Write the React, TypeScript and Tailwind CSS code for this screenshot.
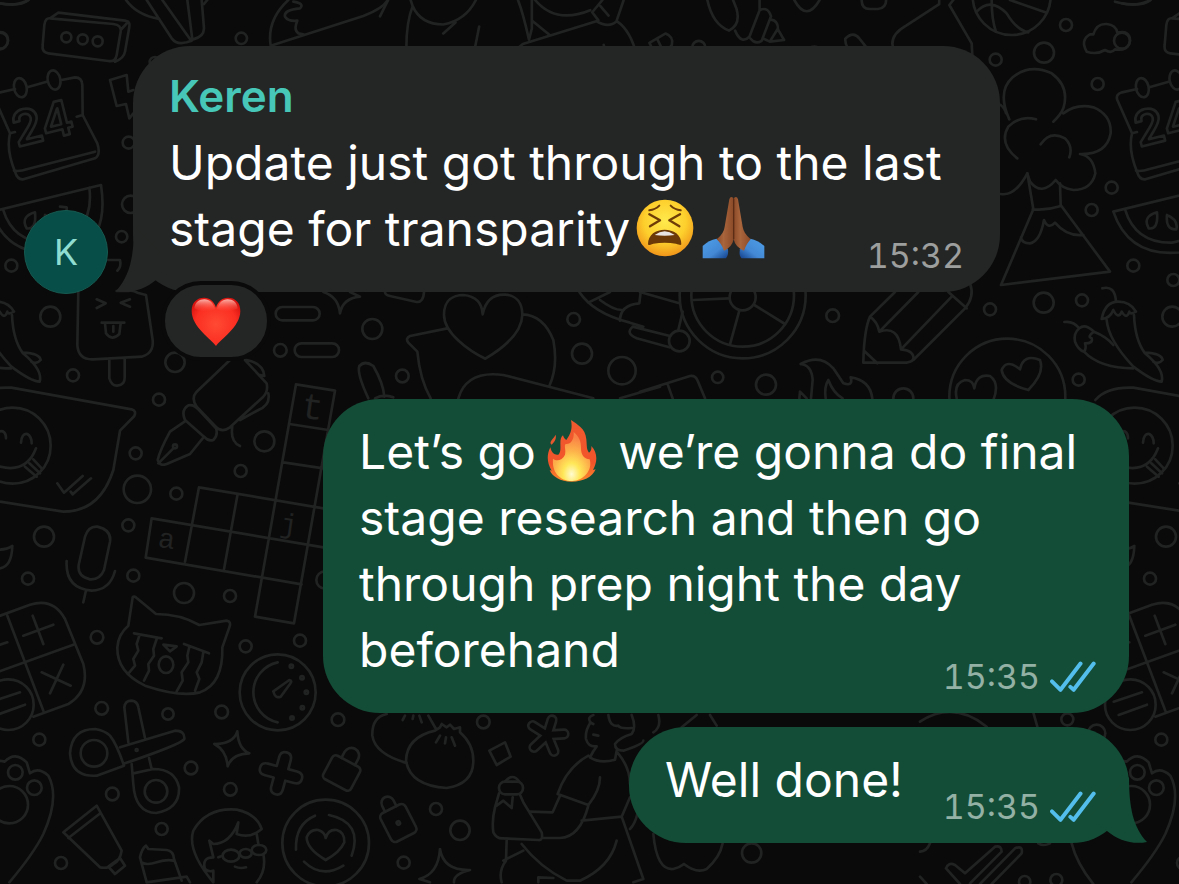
import type { ReactNode } from 'react'
import clsx from 'clsx'

const TILE_WIDTH = 3366

type Dot = [number, number, number]

function Dots({ items }: { items: Dot[] }) {
  return (
    <>
      {items.map(([x, y, r]) => (
        <circle key={`${x}-${y}`} cx={x} cy={y} r={r} />
      ))}
    </>
  )
}

// One tile of the doodle wallpaper, drawn at three units per pixel
function DoodleTile() {
  return (
    <>
      <g>
        <path d="M0 10 Q50 20 85 0" />
        <path d="M150 55 L340 72 Q365 75 362 95 L350 165 Q347 187 325 183 L145 160 Q125 157 128 135 L133 75 Q136 53 150 55 M150 55 L175 38 L375 62 Q392 65 388 80 L375 155 Q372 175 345 185 M362 90 L385 65" />
        <Dots items={[[199, 112, 15], [248, 118, 15], [293, 124, 15], [0, 122, 24], [724, 115, 17], [386, 428, 18], [392, 613, 26], [365, 710, 17], [465, 187, 16]]} />
        <path d="M378 0 Q410 45 478 57 M440 0 L515 115 Q530 135 560 127 L575 122 M487 0 L572 120 M562 0 L577 118 M605 0 L612 85 Q612 110 580 118 M612 12 L622 0" />
        <path d="M865 0 Q800 60 812 137 L1090 48 Q1150 25 1163 0 M880 5 Q915 10 900 25 Q850 30 855 50 Q865 65 892 62 Q880 90 895 100 L910 103" />
        <path d="M45 267 L0 277 Q-20 283 -14 300 L30 400 Q18 450 45 515 Q52 540 70 538 L285 475 Q303 465 292 430 L248 345 L247 255 Q246 232 225 232 L185 240 M82 262 L140 245 M42 512 Q60 515 80 508 L285 455 M30 400 L45 396 M230 350 L248 345" />
        <ellipse cx="61" cy="263" rx="19" ry="29" transform="rotate(-12 61 263)" />
        <ellipse cx="162" cy="240" rx="19" ry="29" transform="rotate(-12 162 240)" />
        <path d="M330 240 L380 225 L385 275 L400 270 M330 240 L350 318 L378 312 L388 355 L400 340" />
        <path d="M-26 635 L303 555 Q325 700 240 745 Q30 800 -26 635 M9 628 Q40 730 150 728 Q285 700 268 563" />
        <path d="M105 637 Q60 650 80 685 Q110 690 105 637 M135 645 Q170 660 163 688 Q130 690 135 645 M180 620 L200 622 L200 650" />
      </g>

      {/* top edge */}
      <g transform="translate(1140 0) scale(1.2245)" strokeWidth="6.5">
        <path d="M0 40 L20 0 M65 140 Q62 60 80 15 Q100 60 155 60 Q210 50 235 0 M80 15 L75 0 M155 82 L185 55 M228 140 L243 65" />
        <path d="M338 0 Q350 30 365 97 M372 50 L415 85 M372 0 Q372 30 372 70 L365 97 M380 0 Q430 60 515 25 M350 135 L335 120 L350 108 L530 52 Q560 70 580 52 Q615 75 630 140 M520 30 L545 0 M580 50 L597 0 M520 30 L535 50 M540 15 L560 38 M548 110 L558 138 M570 120 L578 138" />
        <path d="M660 105 L700 82 Q720 90 715 110 Q705 125 685 120 L695 140 M660 105 L678 140 M680 97 L690 118" />
        <Dots items={[[781, 116, 16], [1064, 130, 16]]} />
        <path d="M802 0 Q815 60 855 75 Q885 60 873 20 L865 0 M870 75 Q885 110 905 90 L930 25 L930 0 M930 25 Q950 15 958 40 L935 100 Q920 110 908 95 M958 48 Q975 50 975 70 L955 102 L940 95 M975 72 L990 98 L955 102" />
        <path d="M1015 0 Q1045 55 1077 0 M1180 0 Q1180 22 1200 22 L1220 22 Q1240 20 1240 0 M1140 95 Q1160 75 1175 95 L1203 130 M1140 95 Q1138 115 1165 140 M1165 138 L1185 115" />
        <path d="M1370 0 L1370 10 L1290 62 Q1240 90 1262 130 L1275 120 L1290 130 L1300 122 L1308 138" />
      </g>

      {/* volcano, chillies and basketball */}
      <g transform="translate(2820 0)">
        <path d="M40 0 L28 15 L95 130 L97 165 M110 35 Q150 -10 200 40 Q230 90 265 97 M155 0 Q155 60 168 95 M210 0 L320 38 M525 5 Q600 25 632 0" />
        <Dots items={[[215, -12, 117], [378, 75, 18], [312, 158, 30], [167, 179, 18], [473, 252, 18], [515, 563, 18], [455, 630, 18], [580, 797, 18], [700, 840, 18], [311, 908, 30], [426, 901, 18], [150, 928, 18], [697, 950, 30], [416, 1139, 18], [202, 1190, 174]]} />
        <path d="M440 155 Q420 120 450 103 L460 103 Q470 70 500 72 Q528 75 532 98 Q570 90 570 122 Q565 155 525 148 Q515 162 495 150 Q470 165 440 155" />
        <path d="M208 358 Q170 275 218 232 Q270 190 335 220 Q390 260 370 325 Q362 345 340 365 M370 340 Q410 310 460 322 Q515 345 512 400 Q500 465 420 462 Q460 468 466 520 Q455 570 400 570 Q365 565 347 540 Q305 590 270 545 L262 520 Q225 590 182 582 M288 358 Q240 345 205 380 Q175 430 232 475 M302 433 Q330 390 375 415 Q400 440 388 472 M182 315 Q195 325 198 340" />
        <path d="M262 520 L280 628 L183 855 L510 815 L362 615 L360 550 M278 628 Q320 632 362 618 M243 712 Q245 730 270 730 Q300 725 312 660 Q325 690 345 668 Q380 710 430 705" />
        <path d="M487 865 Q525 855 528 905 M485 957 Q495 905 535 905 Q570 905 588 935 Q570 945 568 935 Q560 960 545 935 Q535 960 520 930 Q510 955 485 957 M500 960 Q505 1020 580 1100 Q640 1145 665 1145 Q675 1110 615 1060 Q585 1020 582 945 M615 1058 Q665 1060 668 1080 Q655 1095 640 1085" />
        <path d="M373 966 Q400 962 418 985 Q400 1000 405 1025 Q415 1050 432 1055 Q440 1045 435 1030 Q460 1030 455 1015 Q440 1010 462 995 Q435 970 418 985 M462 995 Q500 1010 520 1035 M432 1055 Q480 1105 580 1105" />
        <path d="M265 1170 Q190 1150 185 1110 Q200 1075 240 1108 Q250 1060 300 1080 Q315 1120 265 1170 M50 1195 Q40 1150 75 1140 Q100 1140 103 1165 Q110 1120 150 1128 Q180 1150 160 1200" />
      </g>

      {/* lolly, pen and crossword */}
      <g transform="translate(0 870)">
        <path d="M235 0 L232 165 Q235 210 280 208 L425 200 Q462 190 458 150 L438 15 L412 8 Q400 0 385 3 L350 3 M325 -90 L360 -90 Q365 -70 352 -58 M290 28 L317 40 L290 54 M390 28 L362 38 L390 50 M305 98 L373 98 M315 100 L318 130 Q335 155 358 132 L362 100 M340 108 L340 125 M328 208 L328 265 Q335 288 352 287 Q375 285 374 262 L374 205" />
        <Dots items={[[219, 256, 18], [525, 217, 29], [477, 329, 18], [407, 490, 18], [412, 598, 41], [529, 611, 18], [793, 454, 30], [722, 543, 18], [385, 706, 18], [132, 740, 30], [84, 866, 18], [400, 857, 18], [552, 909, 30], [975, 870, 26], [38, 467, 114]]} />
        <path d="M-80 330 Q-46 290 34 293 L395 358 Q410 362 403 378 L360 422 L340 540 Q300 665 190 665 L0 635 L-80 615 M-5 425 Q18 418 18 445 M63 458 Q65 430 82 432 Q95 440 95 460 M0 530 Q80 550 108 475 M75 530 L110 560 M88 520 L120 550 M100 508 L125 535 M172 580 L192 608 L248 558 M212 605 L218 613 L273 565" />
        <path d="M690 210 L590 305 Q572 325 590 350 L645 408 Q665 430 690 412 L790 320 Q805 305 800 280 L735 210 M740 210 Q790 220 793 258 L780 255 M805 310 Q812 345 775 360 L720 390 M697 410 Q690 455 720 468 M555 390 Q542 360 565 346 Q580 342 595 358 L648 415 Q655 435 640 450 Q625 455 612 440 Z M558 392 L510 425 Q480 480 473 510 Q478 530 500 522 L570 492 L608 445 M475 520 L520 475" />
        <circle cx="525" cy="469" r="6" />
        <path d="M868 402 L985 420 M850 517 L970 535 M597 592 L970 655 M455 685 L970 772 M437 803 L905 883 M455 685 L437 803 M597 592 L555 815 M712 617 L672 838 M1005 302 L888 283 L765 980 L882 1000 L1005 302" />
        <path d="M255 740 Q265 708 292 710 Q335 720 330 755 L312 840 Q300 870 270 868 Q232 860 236 825 Z M200 813 Q195 895 275 902 Q330 900 345 843 M257 905 L250 937 M-30 775 Q10 785 37 768 Q35 830 0 835" />
      </g>

      {/* heart in a speech bubble */}
      <g transform="translate(780 840)">
        <rect x="47" y="81" width="132" height="40" rx="20" />
        <rect x="104" y="190" width="133" height="41" rx="20" />
        <Dots items={[[61, 211, 19], [337, 147, 30], [427, 288, 19], [941, 118, 19], [966, 221, 30], [1086, 272, 41]]} />
        <path d="M190 36 Q235 50 240 100 Q248 55 300 50 L270 36 M375 36 Q375 45 390 48 L470 66 Q490 68 492 36" />
        <path d="M676 236 C630 215 552 160 552 105 C552 60 580 45 610 45 Q665 50 668 103 Q680 42 735 44 C770 46 787 70 787 105 C785 165 720 210 676 236 M562 145 L450 168 Q435 175 445 188 L472 215 Q480 300 512 355 M787 103 Q850 105 880 180 Q895 260 868 318 M595 355 Q620 270 730 285 L1000 355" />
        <path d="M325 355 Q290 280 298 258 Q315 240 340 258 Q370 310 373 350 M345 355 Q370 340 400 352" />
        <path d="M958 36 Q1000 100 1110 128 L1150 140 M985 68 L1050 36 M1020 60 Q1060 90 1085 90 M1080 122 Q1080 75 1138 70 L1142 36 M1118 140 Q1095 160 1130 175 M1118 140 L1230 168 M1130 175 L1228 202 M1080 355 L1200 320" />
      </g>

      {/* wheel, pencil and flames */}
      <g transform="translate(1920 840)">
        <Dots items={[[308, 46, 189], [308, 46, 154], [308, 52, 39], [118, 183, 31], [578, 107, 19], [233, 292, 17], [378, 314, 30], [790, 355, 30]]} />
        <path d="M0 36 L118 70 M128 95 L115 150 M160 60 L268 55 M298 92 L270 193 M343 75 L435 132 M0 335 L150 288 Q165 285 172 300 L195 355 M82 310 L98 355" />
        <path d="M765 36 L690 110 Q712 125 718 155 L835 36 M718 155 Q775 135 783 208 L935 50 M783 208 Q825 212 820 240 L975 85 M925 36 L980 85 M990 10 Q1005 50 975 85 M690 110 Q672 150 670 248 L800 248 Q820 245 820 235 M672 212 L712 250" />
        <path d="M482 252 Q540 220 580 265 L610 310 Q640 320 632 292 Q690 300 697 355 M482 252 Q515 255 518 300 L513 355 M557 355 Q552 320 565 300 Q580 340 608 355 M478 355 L480 335 L500 355" />
      </g>

      {/* calculator, cat, scissors and gauge */}
      <g transform="translate(0 1752)">
        <path d="M-80 125 L90 62 Q160 40 195 105 L250 240 Q270 320 205 360 L100 398 M-80 290 L220 182 M22 95 L130 380 M70 155 L160 122 M98 95 L130 180 M125 265 L212 305 M190 242 L150 328 M0 182 L22 175" />
        <circle cx="25" cy="362" r="76" className="fill-[#0a0a0a]" />
        <path d="M-25 353 L60 325 M-10 393 L75 362" />
        <path d="M385 125 L398 40 Q402 35 410 42 L468 90 Q540 90 598 123 L680 110 Q695 112 688 130 L667 190 Q670 300 600 325 Q540 340 435 305 Q350 265 352 190 Q355 150 385 125 M402 148 L485 163 M552 180 L627 208 M418 155 L410 180 L415 200 L400 225 L405 245 L388 265 M470 165 L460 195 L462 215 L445 240 L447 260 L432 290 M568 188 L562 215 L565 235 L545 265 L548 290 L530 322 M610 205 L605 235 L590 265 L598 285 L585 320 M490 182 L530 187 L510 202 Z" />
        <ellipse cx="498" cy="242" rx="22" ry="25" />
        <Dots items={[[690, 36, 18], [291, 160, 19], [737, 187, 18], [900, 170, 18], [305, 373, 19], [504, 390, 17], [665, 384, 19], [118, 467, 18], [573, 552, 19], [337, 630, 19], [691, 616, 19], [485, 735, 18], [183, 837, 18], [1014, 407, 19], [833, 325, 114], [282, 508, 40], [468, 622, 34], [410, 498, 3], [874, 247, 5], [906, 281, 5], [919, 325, 5], [907, 371, 5], [876, 402, 5], [46, 565, 22], [103, 611, 22], [28, 662, 56], [977, 777, 130]]} />
        <path d="M833 235 A92 92 0 0 0 833 415 M820 322 L868 288 Q878 290 870 300 L842 338 Q825 345 820 322" />
        <path d="M385 475 L373 370 Q375 350 395 350 Q412 352 415 370 L435 462 M360 490 L525 440 Q555 440 553 465 Q545 480 375 538 M330 455 Q350 480 372 545 L290 575 Q215 580 210 508 Q215 435 285 435 Q315 440 330 455 M395 540 L400 600 Q405 685 468 687 Q540 675 537 610 Q525 555 460 555 L400 568 M447 522 L455 555" />
        <path d="M643 480 Q700 480 712 442 Q715 495 748 508 Q695 510 683 547 Q680 500 643 480" />
        <path transform="translate(843 568) rotate(15)" d="M-18 -45 Q-18 -65 0 -65 Q18 -65 18 -45 L18 -18 L45 -18 Q65 -18 65 0 Q65 18 45 18 L18 18 L18 45 Q18 65 0 65 Q-18 65 -18 45 L-18 18 L-45 18 Q-65 18 -65 0 Q-65 -18 -45 -18 L-18 -18Z" />
        <g transform="translate(1025 567) rotate(28)">
          <rect x="-47" y="-40" width="94" height="80" rx="12" />
          <path d="M-22 -40 V-60 A23 23 0 0 1 24 -60 V-40" />
        </g>
        <g transform="translate(1195 717) rotate(-27)">
          <rect x="-42" y="-48" width="84" height="96" rx="14" />
          <path d="M-20 -48 V-68 A19 19 0 0 1 18 -68 V-48" />
          <circle r="5" />
        </g>
        <path d="M-60 560 Q-45 520 14 533 Q45 500 80 535 L90 568 Q115 548 145 575 Q180 640 130 750 Q100 810 28 895 M-151 778 Q-136 838 -86 900" />
        <path d="M190 745 L290 665 L365 800 Q360 830 340 840 Q325 855 300 850 Z M205 762 L298 690 M325 848 L360 822 L375 845 L345 870 Z" />
        <path d="M440 895 L420 820 Q425 795 438 785 L445 795 L500 798 Q520 800 522 825 L545 890 M425 835 Q440 845 470 835 Q500 825 520 830 M440 895 L560 878 L570 895" />
        <path d="M640 895 Q560 800 580 740 Q620 670 710 677 Q770 690 785 735 Q750 765 710 750 L715 715 Q690 780 640 780 L628 770 L640 820 Q605 820 615 855 Q625 865 640 860 L640 895 M655 820 L668 815 M770 750 L775 780 M790 810 Q800 860 770 895 M705 848 Q720 855 738 850" />
        <ellipse cx="693" cy="815" rx="25" ry="18" />
        <ellipse cx="737" cy="808" rx="18" ry="13" />
        <ellipse cx="777" cy="798" rx="22" ry="15" />
        <path d="M945 695 Q885 720 888 797 M987 693 Q1090 715 1055 815 M912 833 Q965 885 1030 845 M977 828 Q920 795 920 760 Q930 735 955 738 Q975 745 977 762 Q985 735 1010 738 Q1035 745 1033 775 Q1020 805 977 828" />
        <path d="M1160 390 Q1115 400 1117 455 Q1125 510 1220 537" />
      </g>

      {/* dumplings and the runner */}
      <g transform="translate(1140 1752)">
        <path d="M165 440 Q80 460 78 530 Q90 605 200 612 Q280 600 280 530 Q280 480 240 445 M165 440 L180 430 L185 420 L200 430 L210 422 L222 435 L240 430 L240 445 M145 395 L168 435 M180 455 L168 475 M198 460 L195 478 M215 460 L225 485 M75 395 L68 408 M100 395 L98 405 M118 395 L125 415" />
        <Dots items={[[310, 414, 19], [168, 675, 18], [240, 739, 29], [71, 836, 18], [1115, 807, 29]]} />
        <path d="M328 500 L375 475 L392 518 L350 543Z" />
        <path strokeWidth="34" d="M502 453 L516 408 M502 453 L552 450 M502 453 L522 502 M502 453 L462 490 M502 453 L458 425" />
        <path strokeWidth="18" className="stroke-[#0a0a0a]" d="M502 453 L516 408 M502 453 L552 450 M502 453 L522 502 M502 453 L462 490 M502 453 L458 425" />
        <path d="M640 393 Q620 400 632 415 Q615 440 618 465 Q625 490 650 487 Q640 500 630 520 Q660 540 705 527 L710 500 M630 415 L640 420 M640 452 L655 455 M625 515 Q560 550 533 630 L625 663 Q660 620 660 580 M685 393 Q690 430 715 425 Q720 435 755 432 M755 393 Q770 430 755 450 Q720 460 705 480 Q705 500 730 500 Q790 480 790 470 M835 393 Q845 430 820 445 M712 505 Q750 550 750 600 M605 710 L725 698 L790 885 L760 895 M725 698 L750 640 M750 735 Q765 720 772 690 M540 635 L518 685 L450 683 M625 665 Q600 760 540 762 L490 762" />
        <rect x="357" y="593" width="72" height="38" rx="18" />
        <path d="M375 593 Q398 565 418 593 M357 628 L345 670 Q335 710 340 745 Q350 765 370 763 L475 768 Q490 770 485 745 L430 655 L420 632 M350 665 L370 650 L395 672 L398 640 M380 768 L378 830 Q355 860 365 895 M425 780 Q480 850 560 890 L600 890 Q690 850 710 770 M370 830 L430 800 M475 895 L475 880 L520 882" />
        <path d="M905 430 L950 393 M990 393 L1010 425 M820 750 Q830 860 880 855 Q900 850 912 840 Q950 870 980 855 Q1020 820 1028 778 M180 795 Q190 860 270 858 Q220 870 222 895 M180 795 Q175 870 118 885 L150 895" />
      </g>

      <g transform="translate(2760 1950)">
        <path d="M0 215 Q100 150 200 230 M340 188 L352 230 M78 655 Q85 635 105 645 L135 670 L225 590 Q245 585 245 605 L150 700 M78 655 L120 702 M180 702 L285 595 Q310 585 305 610 L215 702 M0 605 Q20 605 30 580 M0 680 L20 702 M355 580 Q370 590 390 580" />
        <Dots items={[[442, 208, 18], [530, 250, 26], [409, 690, 18], [314, 695, 17]]} />
      </g>
    </>
  )
}

function Wallpaper() {
  return (
    <svg
      aria-hidden="true"
      className="pointer-events-none absolute inset-0 h-full w-full fill-none stroke-[#212222] font-['Inter',sans-serif]"
      viewBox="0 0 3537 2652"
      preserveAspectRatio="xMinYMin slice"
      strokeWidth="8"
      strokeLinecap="round"
      strokeLinejoin="round"
    >
      {[-TILE_WIDTH, 0, TILE_WIDTH].map((x) => (
        <g key={x} transform={`translate(${x} 0)`}>
          <DoodleTile />
        </g>
      ))}
      {[0, TILE_WIDTH].map((x) => (
        <text key={x} fontSize="145" fontWeight="600" transform={`translate(${x + 50} 442) rotate(-14)`}>
          24
        </text>
      ))}
      {/* crossword letters */}
      <g className="fill-[#212222] stroke-none font-['Liberation_Mono',monospace]">
        <text fontSize="110" transform="translate(900 1252) rotate(8)">t</text>
        <text fontSize="84" transform="translate(838 1596) rotate(8)">j</text>
        <text fontSize="84" transform="translate(472 1640) rotate(8)">a</text>
      </g>
    </svg>
  )
}

function TiredFace() {
  return (
    <svg role="img" aria-label="tired face" className="-my-1 ml-1.5 inline-block h-[58px] w-[58px] align-[-7px]" viewBox="0 0 174 174">
      <defs>
        <radialGradient id="face" cx="50%" cy="38%" r="62%">
          <stop offset="0" stopColor="#ffea4d" />
          <stop offset=".6" stopColor="#fdcf2c" />
          <stop offset="1" stopColor="#f0951a" />
        </radialGradient>
      </defs>
      <circle cx="87" cy="87" r="85" fill="url(#face)" />
      <g fill="none" stroke="#6e3c06" strokeWidth="6" strokeLinecap="round" strokeLinejoin="round">
        <path d="M40 34 Q58 32 70 20 M104 20 Q116 32 134 34" />
        <path strokeWidth="7" d="M40 46 L72 64 L42 82 M132 46 L100 64 L130 82" />
      </g>
      <path d="M36 136 C36 106 60 92 86 92 C112 92 137 106 136 136 C134 140 128 136 120 134 Q86 128 52 134 C42 137 37 140 36 136Z" fill="#6b3907" />
      <path d="M56 108 Q86 86 116 108 Q86 112 56 108Z" fill="#e9e4e4" />
    </svg>
  )
}

function FoldedHands() {
  return (
    <svg role="img" aria-label="folded hands" className="-my-1 ml-2 inline-block h-[63px] w-[63px] align-[-9px]" viewBox="0 0 189 189">
      <defs>
        <linearGradient id="skin" x1="0" x2="1">
          <stop offset="0" stopColor="#8b4a28" />
          <stop offset=".4" stopColor="#a9653c" />
          <stop offset="1" stopColor="#8b4a28" />
        </linearGradient>
        <linearGradient id="sleeve-left" x1="0" y1="0" x2="1" y2="1">
          <stop offset="0" stopColor="#4f9fe8" />
          <stop offset=".6" stopColor="#4388d4" />
          <stop offset="1" stopColor="#123f8a" />
        </linearGradient>
        <linearGradient id="sleeve-right" x1="1" y1="0" x2="0" y2="1">
          <stop offset="0" stopColor="#4f9fe8" />
          <stop offset=".6" stopColor="#4388d4" />
          <stop offset="1" stopColor="#123f8a" />
        </linearGradient>
      </defs>
      <path d="M2 150 Q20 132 44 128 L78 160 Q80 178 72 187 H2Z" fill="url(#sleeve-left)" />
      <path d="M187 150 Q168 132 145 128 L114 160 Q110 178 118 187 H187Z" fill="url(#sleeve-right)" />
      <path d="M94 6 Q86 -2 82 10 L68 92 Q66 112 44 130 Q58 142 66 164 Q90 154 95 130Z" fill="url(#skin)" />
      <path d="M96 6 Q104 -2 108 10 L122 92 Q125 112 146 130 Q134 142 126 164 Q100 154 95 130Z" fill="url(#skin)" />
      <path d="M95 8 V130" stroke="#5c2c14" strokeWidth="4" />
    </svg>
  )
}

function Fire() {
  return (
    <svg role="img" aria-label="fire" className="-my-1 mr-2 ml-[11px] inline-block h-[62px] w-[50px] align-[-9px]" viewBox="0 0 150 186">
      <defs>
        <linearGradient id="flame" x1="0" y1="0" x2="0" y2="1">
          <stop offset="0" stopColor="#ee5a2e" />
          <stop offset=".7" stopColor="#f2542a" />
          <stop offset="1" stopColor="#f98a2b" />
        </linearGradient>
        <radialGradient id="core" cx="50%" cy="86%" r="75%">
          <stop offset="0" stopColor="#fffbd0" />
          <stop offset=".3" stopColor="#ffe758" />
          <stop offset=".65" stopColor="#fdb04a" />
          <stop offset="1" stopColor="#f98346" />
        </radialGradient>
      </defs>
      <path d="M72 0 C88 12 116 24 118 58 C120 78 118 88 126 98 C132 94 134 88 133 78 C152 98 152 124 138 150 L146 148 C136 172 108 185 74 185 C40 185 16 170 8 150 L14 152 C-2 126 0 102 10 82 C14 100 24 106 34 104 C48 92 32 58 48 46 C50 54 54 58 58 60 C68 44 78 30 72 0Z" fill="url(#flame)" />
      <path d="M80 36 C96 50 102 62 102 84 C102 104 110 116 128 118 C138 150 110 183 76 183 C36 183 14 154 18 116 C30 126 46 120 54 104 C58 90 50 78 56 72 C70 74 82 60 80 36Z" fill="url(#core)" />
      <path d="M26 44 C28 54 26 62 14 74 C4 66 18 58 26 44Z" fill="#e8582f" />
    </svg>
  )
}

function RedHeart() {
  return (
    <svg role="img" aria-label="red heart" className="h-[49px] w-[50px]" viewBox="0 0 150 147">
      <defs>
        <radialGradient id="heart" cx="50%" cy="55%" r="60%">
          <stop offset="0" stopColor="#ff4a33" />
          <stop offset=".7" stopColor="#fb2e22" />
          <stop offset="1" stopColor="#d81410" />
        </radialGradient>
        <linearGradient id="gloss" x1="0" y1="0" x2="0" y2="1">
          <stop offset="0" stopColor="#ffc4bb" stopOpacity=".9" />
          <stop offset="1" stopColor="#ff5a48" stopOpacity="0" />
        </linearGradient>
      </defs>
      <path d="M75 147 C62 128 2 90 2 42 C2 16 18 2 39 2 C57 2 70 14 75 32 C80 14 93 2 111 2 C132 2 148 16 148 42 C148 90 88 128 75 147Z" fill="url(#heart)" />
      <path d="M10 34 C12 16 24 7 40 7 C56 7 67 18 72 36 C52 46 28 46 10 34Z M140 34 C138 16 126 7 110 7 C94 7 83 18 78 36 C98 46 122 46 140 34Z" fill="url(#gloss)" />
    </svg>
  )
}

function ReadTicks() {
  return (
    <svg
      role="img"
      aria-label="Read"
      className="h-8 w-[46px] fill-none stroke-[#53bdeb]"
      viewBox="0 0 140 96"
      strokeWidth="12"
      strokeLinecap="round"
      strokeLinejoin="round"
    >
      <path d="M6 61 L32 87 L93 7 M62 78 L72 87 L133 7" />
    </svg>
  )
}

function Tail({ mine }: { mine?: boolean }) {
  return (
    <svg
      aria-hidden="true"
      className={clsx(
        'absolute bottom-0 h-[66px] w-[58px]',
        mine ? '-right-[18px] fill-[#144d37]' : '-left-[17px] -scale-x-100 fill-[#242625]',
      )}
      viewBox="0 0 58 66"
    >
      <path d="M40 0 C40 30 44 50 58 65 C43 68 29 63 18 54 L0 40 Z" />
    </svg>
  )
}

type BubbleProps = {
  children: ReactNode
  time: string
  author?: string
  mine?: boolean
  tail?: boolean
  className?: string
}

function Bubble({ children, time, author, mine, tail, className }: BubbleProps) {
  return (
    <article
      className={clsx(
        'relative grid rounded-[57px] pl-9',
        mine ? 'bg-[#144d37] pt-5 pr-[33px]' : 'bg-[#242625] pt-6 pr-9',
        className,
      )}
    >
      {tail && <Tail mine={mine} />}
      <div className="relative col-start-1 row-start-1 pb-[30px]">
        {author && <h2 className="mb-2 text-[44px] leading-[52px] font-semibold text-[#46c7b8]">{author}</h2>}
        <p className="text-[48px] leading-[66px] text-white">{children}</p>
      </div>
      <div
        className={clsx(
          'relative col-start-1 row-start-1 mb-3.5 flex items-center gap-2.5 self-end justify-self-end text-[34px] leading-[44px] tabular-nums',
          mine ? 'text-[#93b1a5]' : 'text-[#9d9e9e]',
        )}
      >
        <time>{time}</time>
        {mine && <ReadTicks />}
      </div>
    </article>
  )
}

export default function App() {
  return (
    <div className="relative min-h-screen overflow-hidden bg-[#0a0a0a] font-['Inter',sans-serif]">
      <Wallpaper />
      <main className="relative flex flex-col pt-[46px] pr-[50px] pb-10 pl-6">
        <div className="flex items-end gap-[25px]">
          <div className="-mb-0.5 flex h-[84px] w-[84px] shrink-0 items-center justify-center rounded-full border border-[#165a50] bg-[#074d48] text-[36px] text-[#8fdcd0]">
            K
          </div>
          <Bubble author="Keren" time="15:32" tail className="w-full max-w-[867px]">
            Update just got through to the last stage for transparity
            <TiredFace />
            <FoldedHands />
          </Bubble>
        </div>
        <button
          type="button"
          className="relative -mt-[11px] ml-[137px] flex h-20 w-[110px] items-center justify-center rounded-full border-4 border-[#0a0a0a] bg-[#242625]"
        >
          <RedHeart />
        </button>

        <Bubble mine time="15:35" className="mt-[38px] w-full max-w-[806px] self-end">
          Let’s go
          <Fire /> we’re gonna do final stage research and then go through prep night the day beforehand
        </Bubble>
        <Bubble mine time="15:35" tail className="mt-3.5 w-full max-w-[500px] self-end">
          Well done!
        </Bubble>
      </main>
    </div>
  )
}
